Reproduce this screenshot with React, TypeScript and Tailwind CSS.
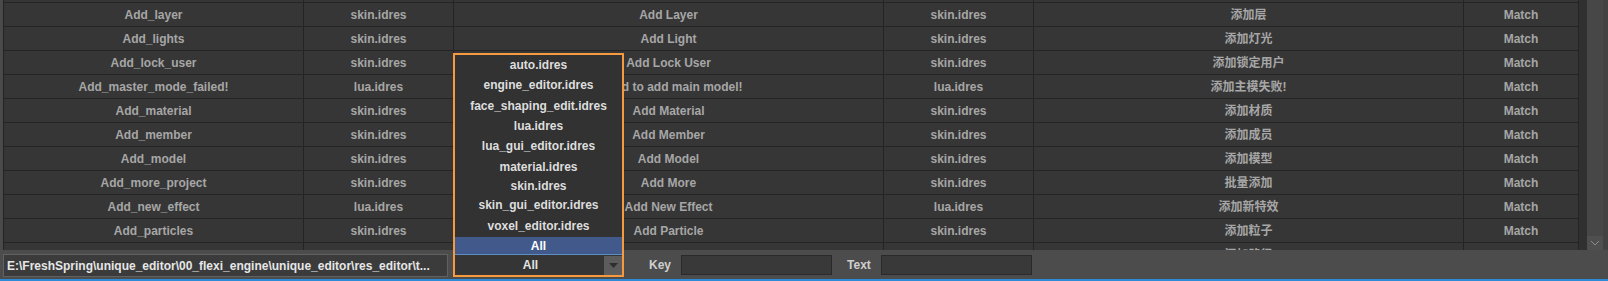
const rows: string[][] = [
  ['Add_layer', 'skin.idres', 'Add Layer', 'skin.idres', '添加层', 'Match'],
  ['Add_lights', 'skin.idres', 'Add Light', 'skin.idres', '添加灯光', 'Match'],
  ['Add_lock_user', 'skin.idres', 'Add Lock User', 'skin.idres', '添加锁定用户', 'Match'],
  ['Add_master_mode_failed!', 'lua.idres', 'Failed to add main model!', 'lua.idres', '添加主模失败!', 'Match'],
  ['Add_material', 'skin.idres', 'Add Material', 'skin.idres', '添加材质', 'Match'],
  ['Add_member', 'skin.idres', 'Add Member', 'skin.idres', '添加成员', 'Match'],
  ['Add_model', 'skin.idres', 'Add Model', 'skin.idres', '添加模型', 'Match'],
  ['Add_more_project', 'skin.idres', 'Add More', 'skin.idres', '批量添加', 'Match'],
  ['Add_new_effect', 'lua.idres', 'Add New Effect', 'lua.idres', '添加新特效', 'Match'],
  ['Add_particles', 'skin.idres', 'Add Particle', 'skin.idres', '添加粒子', 'Match'],
  ['Add_path', '', '', '', '添加路径', ''],
]

const colWidths = ['w-[300px]', 'w-[150px]', 'w-[430px]', 'w-[150px]', 'w-[430px]', 'w-[115px]']

// heights picked so the uneven spacing of the popup list lines up
const popupItems: [string, string][] = [
  ['auto.idres', 'h-[20px]'],
  ['engine_editor.idres', 'h-[20px]'],
  ['face_shaping_edit.idres', 'h-[21px]'],
  ['lua.idres', 'h-[20px]'],
  ['lua_gui_editor.idres', 'h-[20px]'],
  ['material.idres', 'h-[21px]'],
  ['skin.idres', 'h-[18px]'],
  ['skin_gui_editor.idres', 'h-[19px]'],
  ['voxel_editor.idres', 'h-[23px]'],
]

function Row({ cells, partial }: { cells: string[]; partial?: boolean }) {
  return (
    <div className={partial ? 'flex h-[2px] shrink-0' : 'flex h-[24px] shrink-0 border-t border-[#242424]'}>
      {colWidths.map((w, i) => (
        <div
          key={i}
          className={`${w} shrink-0 border-r border-[#242424] flex items-center justify-center whitespace-nowrap overflow-hidden`}
        >
          {cells[i]}
        </div>
      ))}
    </div>
  )
}

export default function App() {
  return (
    <div className="w-[1608px] h-[281px] bg-[#4a4a4a] flex flex-col overflow-hidden font-['Liberation_Sans','Noto_Sans_CJK_SC',sans-serif] font-bold text-[12px] leading-none">
      {/* Table */}
      <div className="h-[250px] flex shrink-0 pl-[3px]">
        <div className="w-[1584px] bg-[#303030] border-l border-[#242424] overflow-hidden">
          <div className="w-[1575px] bg-[#363636] text-[#a6a6a6] flex flex-col h-[250px] overflow-hidden">
            <Row cells={[]} partial />
            {rows.map((r, i) => (
              <Row key={i} cells={r} />
            ))}
          </div>
        </div>
        {/* Scrollbar */}
        <div className="w-[16px] bg-[#474747] flex flex-col justify-end">
          <div className="h-[14px] bg-[#4f4f4f] flex items-center justify-center">
            <svg width="10" height="6" viewBox="0 0 10 6">
              <polyline points="1,1 5,5 9,1" fill="none" stroke="#8a8a8a" strokeWidth="1" />
            </svg>
          </div>
        </div>
        <div className="w-[5px] bg-[#424242]" />
      </div>

      {/* Bottom bar */}
      <div className="h-[31px] bg-[#4c4c4c] border-b-2 border-[#2d8ad6] flex items-start pt-[4px] pl-[3px]">
        <div className="w-[445px] h-[23px] bg-[#3b3b3b] border border-[#616161] text-[#e6e6e6] flex items-center pl-[3px] whitespace-nowrap overflow-hidden">
          E:\FreshSpring\unique_editor\00_flexi_engine\unique_editor\res_editor\t...
        </div>

        {/* Combo with open popup */}
        <div className="relative w-[171px] h-[23px] ml-[5px] shrink-0">
          <div className="absolute left-0 bottom-0 w-[171px] h-[224px] border-2 border-[#f59a3f] bg-[#323232] flex flex-col">
            <div className="flex flex-col text-[#dedede]">
              {popupItems.map(([t, h]) => (
                <div key={t} className={`${h} flex items-center justify-center whitespace-nowrap`}>
                  {t}
                </div>
              ))}
            </div>
            <div className="h-[18px] bg-[#415a8b] border-b border-[#5d8fc4] text-white flex items-center justify-center">
              All
            </div>
            <div className="h-[20px] bg-[#353535] flex items-stretch">
              <div className="flex-1 flex items-center justify-center text-[#e4e4e4] pl-[2px]">All</div>
              <div className="w-[18px] mt-[1px] bg-[#5c5c5c] flex items-center justify-center">
                <svg width="9" height="5" viewBox="0 0 9 5">
                  <polygon points="0,0 9,0 4.5,5" fill="#2e2e2e" />
                </svg>
              </div>
            </div>
          </div>
        </div>

        <div className="ml-[25px] h-[22px] flex items-center text-[#cfcfcf]">Key</div>
        <div className="ml-[10px] mt-[1px] w-[151px] h-[20px] bg-[#393939] border border-[#2a2a2a]" />
        <div className="ml-[15px] h-[22px] flex items-center text-[#cfcfcf]">Text</div>
        <div className="ml-[10px] mt-[1px] w-[151px] h-[20px] bg-[#393939] border border-[#2a2a2a]" />
      </div>
    </div>
  )
}
